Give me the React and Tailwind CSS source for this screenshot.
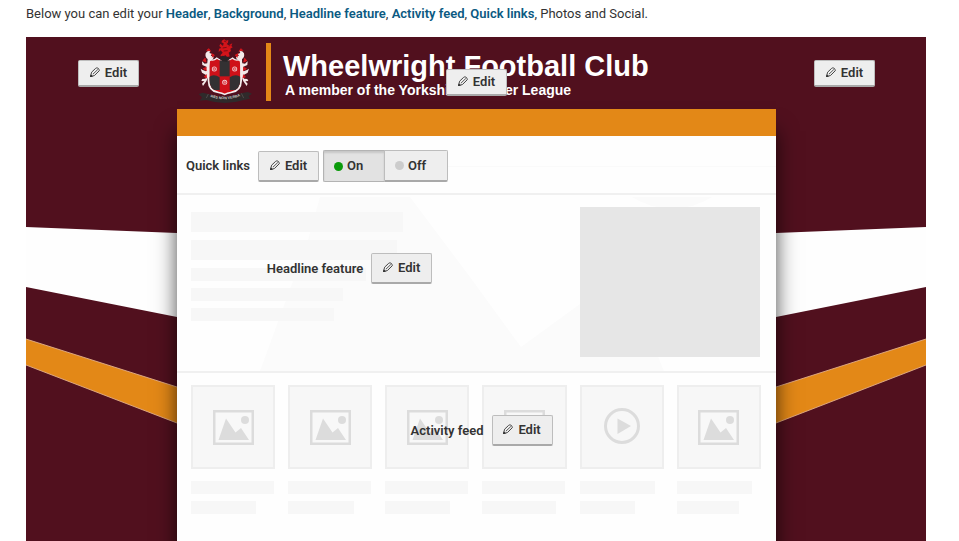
import { useState } from "react";

const LINKS = ["Header", "Background", "Headline feature", "Activity feed", "Quick links"];

const HEADLINE_BARS = [
  "mb-2 h-5 w-[212px]",
  "mb-2 h-5 w-[206px]",
  "mb-[7px] h-[13px] w-[175px]",
  "mb-[7px] h-[13px] w-[152px]",
  "h-[13px] w-[143px]",
];

const FEED = [
  { kind: "photo", title: "w-[83px]", meta: "w-[65px]" },
  { kind: "photo", title: "w-[83px]", meta: "w-[66px]" },
  { kind: "photo", title: "w-[83px]", meta: "w-[65px]" },
  { kind: "photo", title: "w-[83px]", meta: "w-[74px]" },
  { kind: "video", title: "w-[75px]", meta: "w-[55px]" },
  { kind: "photo", title: "w-[75px]", meta: "w-[62px]" },
];

function PencilIcon() {
  return (
    <svg
      className="mb-[2px] h-[10px] w-[10px] shrink-0"
      viewBox="0 0 10 10"
      fill="none"
      stroke="#333"
      strokeWidth="0.9"
      strokeLinejoin="round"
      strokeLinecap="round"
      aria-hidden="true"
    >
      <path d="M0.6 9.3 L1.6 5.2 L5.6 1.4 Q6.6 0.5 7.8 1.1 Q9.6 2.2 9.3 3.7 L4.8 8.2 Z" />
      <path d="M3.2 6.9 L7.6 2.7" strokeWidth="0.8" />
      <path d="M0.5 9.5 L1 7.9 L2.1 9 Z" fill="#333" />
    </svg>
  );
}

function EditButton({ label, compact }) {
  return (
    <button
      type="button"
      aria-label={label}
      className={
        "flex w-[61px] items-center justify-center gap-[5px] rounded-[2px] border border-[#bdbdbd] border-b-2 border-b-[#a9a9a9] bg-[#eeeeee] text-[13px] font-semibold leading-4 text-[#333] " +
        (compact ? "h-[27px]" : "h-[31px]")
      }
    >
      <PencilIcon />
      <span>Edit</span>
    </button>
  );
}

function Stripes({ mirrored }) {
  return (
    <svg
      className={"absolute inset-x-0 top-0 h-[504px] w-full " + (mirrored ? "-scale-x-100" : "")}
      viewBox="0 0 151 504"
      preserveAspectRatio="none"
      aria-hidden="true"
    >
      <path d="M0 190 L151 196 V280 L0 250 Z" fill="#fefefe" />
      <path d="M0 302 L151 350 V386 L0 328 Z" fill="#e38817" />
      <path d="M0 302 L151 350 M0 328 L151 386" stroke="#e3b08a" strokeWidth="0.9" />
    </svg>
  );
}

function Rose({ x, y }) {
  return (
    <g transform={`translate(${x} ${y})`}>
      <circle r="7.5" fill="#f3d9da" />
      <circle r="5" fill="#d8343c" />
      <circle r="2.6" fill="#fff" />
      <path d="M0 -8 V8 M-8 0 H8 M-5 -5 L5 5 M5 -5 L-5 5" stroke="#e0525a" strokeWidth="1" />
    </g>
  );
}

function Supporter() {
  return (
    <g>
      <path
        d="M84 86 Q74 80 77 68 Q83 58 91 62 L88 67 L97 70 L92 75 L101 78 L99 86 L90 92 L86 112 L85 138 L79 152 L69 166 L66 159 L73 152 L64 151 L67 145 L77 144 L78 133 L66 126 L62 114 L68 118 L78 122 L79 108 L67 103 L66 92 L74 99 L82 98 Z"
        fill="#f4e9e9"
      />
      <path
        d="M80 60 L86 54 L92 62 M76 82 L69 90 L79 94 M79 110 L70 114 L80 120 M80 132 L73 138 L81 142 M94 69 L103 73 L97 80"
        fill="#d9161c"
        stroke="#d9161c"
        strokeWidth="3"
      />
    </g>
  );
}

function Crest() {
  return (
    <svg className="h-[65px] w-[55px] shrink-0" viewBox="54 22 165 195" role="img" aria-label="Club crest">
      <defs>
        <clipPath id="shield">
          <path d="M88 88 Q102 93 111 85 Q122 93 134 88 Q146 93 157 85 Q167 93 181 88 V148 Q181 178 152 183 Q140 185 134 189 Q128 185 116 183 Q88 178 88 148 Z" />
        </clipPath>
        <path id="motto" d="M90 199 Q134 213 180 197" />
      </defs>
      <path
        d="M83 84 Q100 92 110 80 Q122 90 134 85 Q146 90 158 80 Q168 92 186 84 V150 Q185 182 156 187 Q142 189 134 194 Q126 189 112 187 Q84 182 83 150 Z"
        fill="#f3eeee"
      />
      <g clipPath="url(#shield)">
        <rect x="84" y="80" width="102" height="114" fill="#cf1119" />
        <rect x="119" y="80" width="30" height="57" fill="#333133" />
        <path d="M86 140 Q100 127 119 140 V178 H96 Q86 168 86 140 Z" fill="#333133" />
        <path d="M183 140 Q168 127 149 140 V178 H172 Q183 168 183 140 Z" fill="#333133" />
      </g>
      <Rose x={103} y={115} />
      <Rose x={164} y={115} />
      <Rose x={134} y={155} />
      <Supporter />
      <g transform="translate(269 0) scale(-1 1)">
        <Supporter />
      </g>
      <path
        d="M127 29 L133 26 L138 30 L145 28 L144 36 L140 40 L146 44 L157 38 L154 46 L158 50 L151 54 L153 61 L146 66 L149 77 L141 80 L136 73 L127 80 L121 74 L128 66 L122 59 L116 64 L117 54 L124 52 L118 46 L121 39 L129 46 L131 38 L124 35 Z"
        fill="#d3141a"
      />
      <path d="M132 31 L139 34 M128 52 L140 50 M131 61 L143 60 M146 46 L151 44" stroke="#6b0a12" strokeWidth="2.4" />
      <path d="M118 84 Q127 70 134 79 Q143 74 150 84 L140 93 L127 92 Z" fill="#292326" />
      <path
        d="M56 190 L68 186 L85 190 Q134 208 184 188 L203 184 L216 189 L206 196 L210 204 L192 208 Q134 226 78 208 L60 210 L66 200 Z"
        fill="#2f2a2b"
      />
      <path d="M85 190 L79 202 M184 188 L191 202" stroke="#5d5757" strokeWidth="2" />
      <text
        fill="#cfcaca"
        fontSize="11"
        fontWeight="700"
        fontFamily="Liberation Sans, sans-serif"
      >
        <textPath href="#motto" startOffset="1">
          RES NON VERBA
        </textPath>
      </text>
    </svg>
  );
}

function PhotoIcon() {
  return (
    <svg className="h-[35px] w-[41px]" viewBox="0 0 41 35" aria-hidden="true">
      <rect x="1.25" y="1.25" width="38.5" height="32.5" fill="#f8f8f8" stroke="#dcdcdc" strokeWidth="2.5" />
      <path d="M5.5 30 L13 8.5 L22.5 22.5 L28 18 L36 30 Z" fill="#dcdcdc" />
      <circle cx="32" cy="10" r="4" fill="#dcdcdc" />
    </svg>
  );
}

function VideoIcon() {
  return (
    <svg className="mb-[2px] h-[36px] w-[36px]" viewBox="0 0 36 36" aria-hidden="true">
      <circle cx="18" cy="18" r="16.5" fill="none" stroke="#dcdcdc" strokeWidth="3" />
      <path d="M13.5 10.5 L27 18 L13.5 26 Z" fill="#dcdcdc" />
    </svg>
  );
}

function QuickLinksToggle() {
  const [on, setOn] = useState(true);
  const base =
    "flex h-8 items-center gap-1 border pl-[10px] text-[13px] font-semibold leading-4 text-[#333] ";
  const pressed = "border-[#b3b3b3] bg-[#e2e2e2] shadow-[inset_0_2px_2px_rgba(0,0,0,0.12)] ";
  const raised = "border-[#bdbdbd] border-b-2 border-b-[#a9a9a9] bg-[#eeeeee] ";
  return (
    <div className="flex" role="group" aria-label="Quick links visibility">
      <button
        type="button"
        aria-pressed={on}
        onClick={() => setOn(true)}
        className={base + "w-[61px] rounded-l-[2px] border-r-0 " + (on ? pressed : raised)}
      >
        <span className={"size-[9px] rounded-full " + (on ? "bg-[#0a9a0a]" : "bg-[#cccccc]")} />
        On
      </button>
      <button
        type="button"
        aria-pressed={!on}
        onClick={() => setOn(false)}
        className={base + "w-[64px] rounded-r-[2px] " + (on ? raised : pressed)}
      >
        <span className={"size-[9px] rounded-full " + (on ? "bg-[#cccccc]" : "bg-[#c01818]")} />
        Off
      </button>
    </div>
  );
}

function FeedItem({ item }) {
  return (
    <li>
      <div className="mb-3 flex h-[84px] items-center justify-center border-2 border-[#eeeeee] bg-[#f7f7f7]">
        {item.kind === "video" ? <VideoIcon /> : <PhotoIcon />}
      </div>
      <div className={"mb-[7px] h-[13px] bg-[#f7f7f7] " + item.title} />
      <div className={"h-[13px] bg-[#f7f7f7] " + item.meta} />
    </li>
  );
}

export default function App() {
  return (
    <div className="flex min-h-screen flex-col bg-white pl-[26px] pr-[33px] font-['Roboto',sans-serif] text-[13px] text-[#333]">
      <p className="pb-[13px] pt-1 leading-5">
        Below you can edit your{" "}
        {LINKS.map((name) => (
          <span key={name}>
            <a href="#" className="font-semibold text-[#0b5a82]">
              {name}
            </a>
            ,{" "}
          </span>
        ))}
        Photos and Social.
      </p>

      <main className="grid flex-1 grid-cols-[151px_minmax(0,1fr)_150px] overflow-hidden bg-[#51101e]">
        <div className="relative">
          <Stripes />
          <div className="relative flex pl-[52px] pt-[23px]">
            <EditButton label="Edit background, left side" compact />
          </div>
        </div>

        <div className="relative z-10 flex flex-col">
          <header className="relative flex h-[72px] pl-[21px]">
            <div className="pt-px">
              <Crest />
            </div>
            <div className="ml-[13px] mt-[6px] h-[58px] w-[5px] bg-[#e38817]" />
            <div className="ml-3 whitespace-nowrap pt-[13px] font-['Liberation_Sans',Arial,sans-serif] font-bold text-white">
              <h1 className="text-[29px] leading-8">Wheelwright Football Club</h1>
              <p className="pl-0.5 text-[14px] leading-4">A member of the Yorkshire Premier League</p>
            </div>
            <div className="absolute inset-x-0 top-8 flex justify-center">
              <EditButton label="Edit header" compact />
            </div>
          </header>

          <div className="flex-1 bg-[#fefefe] shadow-[0_22px_20px_rgba(0,0,0,0.7)]">
            <div className="h-[27px] bg-[#e38817]" />

            <section className="flex items-center border-b-2 border-[#f0f0f0] pb-[11px] pl-[9px] pt-[14px]">
              <h2 className="mr-2 font-semibold leading-4">Quick links</h2>
              <EditButton label="Edit quick links" />
              <div className="ml-1">
                <QuickLinksToggle />
              </div>
              <div className="h-px flex-1 bg-[#fafafa]" />
            </section>

            <section className="relative flex justify-between border-b-2 border-[#f0f0f0] pb-[14px] pl-[14px] pr-4 pt-3">
              <svg
                className="absolute left-0 top-0 h-full w-full"
                viewBox="0 0 599 176"
                preserveAspectRatio="xMinYMin slice"
                aria-hidden="true"
              >
                <path d="M143 2 H233 L293 82 L344 152 L403 109 L440 60 L487 176 H83 L131 45 Z" fill="#fbfbfb" />
                <path d="M455 2 H535 Q495 26 455 2 Z" fill="#fbfbfb" />
              </svg>
              <div className="relative pt-[5px]">
                {HEADLINE_BARS.map((size, i) => (
                  <div key={i} className={"bg-[#f7f7f7] " + size} />
                ))}
              </div>
              <div className="relative h-[150px] w-[180px] bg-[#e6e6e6]" />
              <div className="absolute left-[15%] top-[58px] flex items-center gap-2">
                <h2 className="font-semibold leading-4">Headline feature</h2>
                <EditButton label="Edit headline feature" />
              </div>
            </section>

            <section className="relative pb-6 pl-[14px] pr-[15px] pt-3">
              <ul className="grid grid-cols-6 gap-x-[13px]">
                {FEED.map((item, i) => (
                  <FeedItem key={i} item={item} />
                ))}
              </ul>
              <div className="absolute left-[39%] top-[42px] flex items-center gap-2">
                <h2 className="font-semibold leading-4">Activity feed</h2>
                <EditButton label="Edit activity feed" />
              </div>
            </section>
          </div>
        </div>

        <div className="relative">
          <Stripes mirrored />
          <div className="relative flex justify-end pr-[51px] pt-[23px]">
            <EditButton label="Edit background, right side" compact />
          </div>
        </div>
      </main>
    </div>
  );
}
